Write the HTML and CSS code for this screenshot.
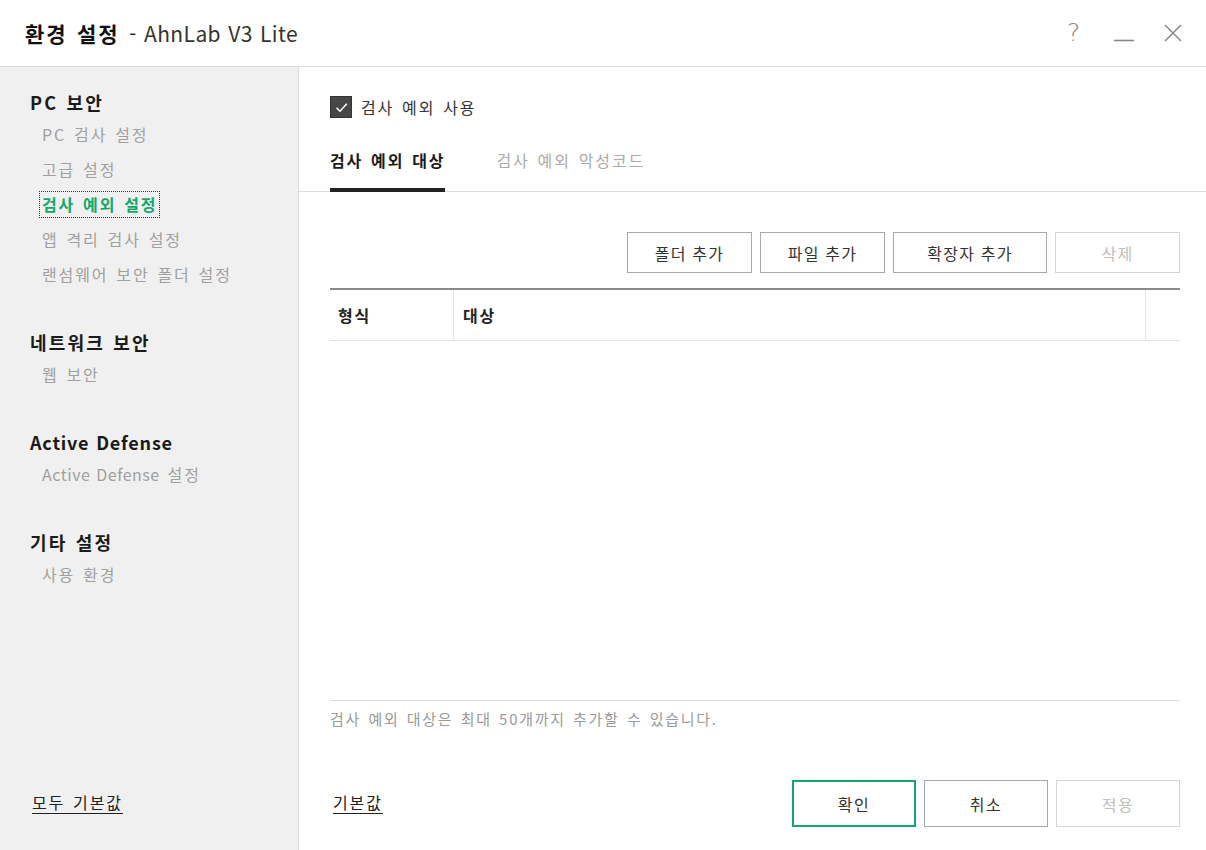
FILE: index.html
```html
<!DOCTYPE html>
<html lang="ko">
<head>
    <meta charset="UTF-8">
    <title>환경 설정 - AhnLab V3 Lite</title>
    <link rel="stylesheet" href="styles.css">
</head>
<body>

    <!-- Title Bar -->
    <div class="titlebar">
        <div class="title"><strong>환경 설정</strong> <span class="latin">- AhnLab V3 Lite</span></div>
        <div class="window-buttons">
            <span class="win-btn help">?</span>
            <svg class="win-btn" width="22" height="22" viewBox="0 0 22 22"><line x1="1" y1="18.5" x2="21" y2="18.5" stroke="#888" stroke-width="1.6"/></svg>
            <svg class="win-btn" width="22" height="22" viewBox="0 0 22 22"><path d="M3 3 L19 19 M19 3 L3 19" stroke="#888" stroke-width="1.5" fill="none"/></svg>
        </div>
    </div>

    <div class="window">
        <!-- Sidebar -->
        <div class="sidebar">
            <div class="group">
                <div class="group-title">PC 보안</div>
                <div class="item"><span>PC 검사 설정</span></div>
                <div class="item"><span>고급 설정</span></div>
                <div class="item active"><span>검사 예외 설정</span></div>
                <div class="item"><span>앱 격리 검사 설정</span></div>
                <div class="item"><span>랜섬웨어 보안 폴더 설정</span></div>
            </div>
            <div class="group">
                <div class="group-title">네트워크 보안</div>
                <div class="item"><span>웹 보안</span></div>
            </div>
            <div class="group">
                <div class="group-title latin">Active Defense</div>
                <div class="item"><span><span class="latin">Active Defense</span> 설정</span></div>
            </div>
            <div class="group">
                <div class="group-title">기타 설정</div>
                <div class="item"><span>사용 환경</span></div>
            </div>
            <div class="sidebar-footer">
                <a class="link">모두 기본값</a>
            </div>
        </div>

        <!-- Main Panel -->
        <div class="main">
            <label class="check-row">
                <span class="checkbox">
                    <svg width="15" height="15" viewBox="0 0 15 15"><path d="M2.5 7.8 L6 11.2 L12.8 3.8" stroke="#fff" stroke-width="1.6" fill="none"/></svg>
                </span>
                검사 예외 사용
            </label>

            <div class="tabs">
                <div class="tab selected">검사 예외 대상</div>
                <div class="tab">검사 예외 악성코드</div>
            </div>

            <div class="content">
                <div class="toolbar">
                    <button class="btn">폴더 추가</button>
                    <button class="btn">파일 추가</button>
                    <button class="btn wide">확장자 추가</button>
                    <button class="btn" disabled>삭제</button>
                </div>

                <div class="table">
                    <div class="table-head">
                        <div class="col col-type">형식</div>
                        <div class="col col-target">대상</div>
                        <div class="col col-end"></div>
                    </div>
                    <div class="table-body"></div>
                </div>

                <p class="note">검사 예외 대상은 최대 50개까지 추가할 수 있습니다.</p>

                <div class="footer">
                    <a class="link">기본값</a>
                    <div class="footer-buttons">
                        <button class="btn big primary">확인</button>
                        <button class="btn big">취소</button>
                        <button class="btn big" disabled>적용</button>
                    </div>
                </div>
            </div>
        </div>
    </div>

</body>
</html>
```

FILE: styles.css
```css
body {
    font-family: "Noto Sans CJK KR", "Noto Sans", sans-serif;
    margin: 0;
    padding: 0;
    width: 1206px;
    height: 850px;
    overflow: hidden;
    background-color: #fff;
    color: #333;
    display: flex;
    flex-direction: column;
    letter-spacing: 1.9px; /* korean text in the original is spaced wide */
    word-spacing: 1.5px;
}

/* latin words are spaced less than korean */
.latin {
    letter-spacing: 0.5px;
    word-spacing: 1px;
}

/* Title Bar */
.titlebar {
    height: 66px;
    border-bottom: 1px solid #dcdcdc;
    display: flex;
    align-items: center;
    justify-content: space-between;
    padding: 0 22px 0 25px;
    flex-shrink: 0;
}

.title {
    font-size: 21px;
    color: #333;
    letter-spacing: 2px;
}

.title strong {
    color: #111;
    font-weight: 700;
}

.title .latin {
    letter-spacing: 0.4px;
}

.window-buttons {
    display: flex;
    align-items: center;
    gap: 27px;
}

.win-btn.help {
    font-family: "DejaVu Sans", sans-serif;
    font-size: 25px;
    font-weight: 200;
    color: #888;
    width: 14px;
    line-height: 24px;
    margin-right: 5px;
    letter-spacing: 0;
}

/* Window body */
.window {
    flex: 1;
    display: flex;
}

/* Sidebar */
.sidebar {
    width: 299px;
    background-color: #f0f0f0;
    border-right: 1px solid #dedede;
    padding: 23px 0 36px 0;
    box-sizing: border-box;
    display: flex;
    flex-direction: column;
    flex-shrink: 0;
}

.group {
    padding-left: 30px;
    margin-bottom: 38px;
}

.group-title {
    font-size: 18px;
    font-weight: 700;
    color: #1a1a1a;
    line-height: 24px;
    margin-bottom: 3px;
    letter-spacing: 2.2px;
    word-spacing: 1px;
}

.group-title.latin {
    letter-spacing: 0.8px;
}

.item {
    height: 35px;
    display: flex;
    align-items: center;
    font-size: 16px;
    color: #a0a0a0;
}

.item > span {
    padding: 1px 2px;
    margin-left: 9px;
    border: 1px dotted transparent;
    line-height: 23px;
}

.item.active > span {
    color: #13a86b;
    font-weight: 700;
    border-color: #333;
}

.sidebar-footer {
    margin-top: auto;
    padding-left: 32px;
    height: 24px;
}

.link {
    font-size: 16px;
    color: #222;
    text-decoration: underline;
    text-underline-offset: 4px;
    line-height: 24px;
}

/* Main */
.main {
    flex: 1;
    display: flex;
    flex-direction: column;
}

.check-row {
    display: flex;
    align-items: center;
    gap: 9px;
    font-size: 16px;
    color: #333;
    margin: 29px 0 0 31px;
    height: 22px;
}

.checkbox {
    width: 20px;
    height: 20px;
    background-color: #474747;
    border: 1px solid #333;
    display: flex;
    align-items: center;
    justify-content: center;
}

.tabs {
    display: flex;
    gap: 51px;
    padding-left: 31px;
    margin-top: 30px;
    border-bottom: 1px solid #dcdcdc;
}

.tab {
    font-size: 16px;
    color: #aaa;
    line-height: 24px;
    padding-bottom: 16px;
    border-bottom: 4px solid transparent;
    margin-bottom: -1px;
}

.tab.selected {
    color: #1a1a1a;
    font-weight: 700;
    border-bottom-color: #222;
}

.content {
    flex: 1;
    display: flex;
    flex-direction: column;
    padding: 0 26px 23px 31px;
}

.toolbar {
    display: flex;
    justify-content: flex-end;
    gap: 8px;
    margin-top: 40px;
}

.btn {
    font-family: inherit;
    font-size: 16px;
    letter-spacing: 1.2px;
    color: #333;
    background-color: #fff;
    border: 1px solid #a8a8a8;
    width: 125px;
    height: 41px;
    padding: 0;
}

.btn.wide {
    width: 154px;
}

.btn:disabled {
    color: #c0c0c0;
    border-color: #d4d4d4;
}

.table {
    flex: 1;
    display: flex;
    flex-direction: column;
    margin-top: 15px;
    border-top: 2px solid #8a8a8a;
    border-bottom: 1px solid #dcdcdc;
}

.table-head {
    display: flex;
    height: 50px;
    border-bottom: 1px solid #e0e0e0;
}

.col {
    font-size: 16px;
    font-weight: 700;
    color: #222;
    display: flex;
    align-items: center;
}

.col-type {
    width: 123px;
    padding-left: 8px;
    box-sizing: border-box;
}

.col-target {
    flex: 1;
    padding-left: 9px;
    border-left: 1px solid #e4e4e4;
}

.col-end {
    width: 34px;
    border-left: 1px solid #e4e4e4;
}

.note {
    font-size: 15px;
    color: #9a9a9a;
    margin: 8px 0 0 0;
    line-height: 20px;
    letter-spacing: 1.7px;
}

.footer {
    display: flex;
    align-items: center;
    justify-content: space-between;
    margin-top: 51px;
    padding-left: 3px;
}

.footer .link {
    margin-top: -4px;
}

.footer-buttons {
    display: flex;
    gap: 8px;
}

.btn.big {
    width: 124px;
    height: 47px;
    letter-spacing: 1.5px;
}

.btn.primary {
    border: 2px solid #13a86b;
}
```
